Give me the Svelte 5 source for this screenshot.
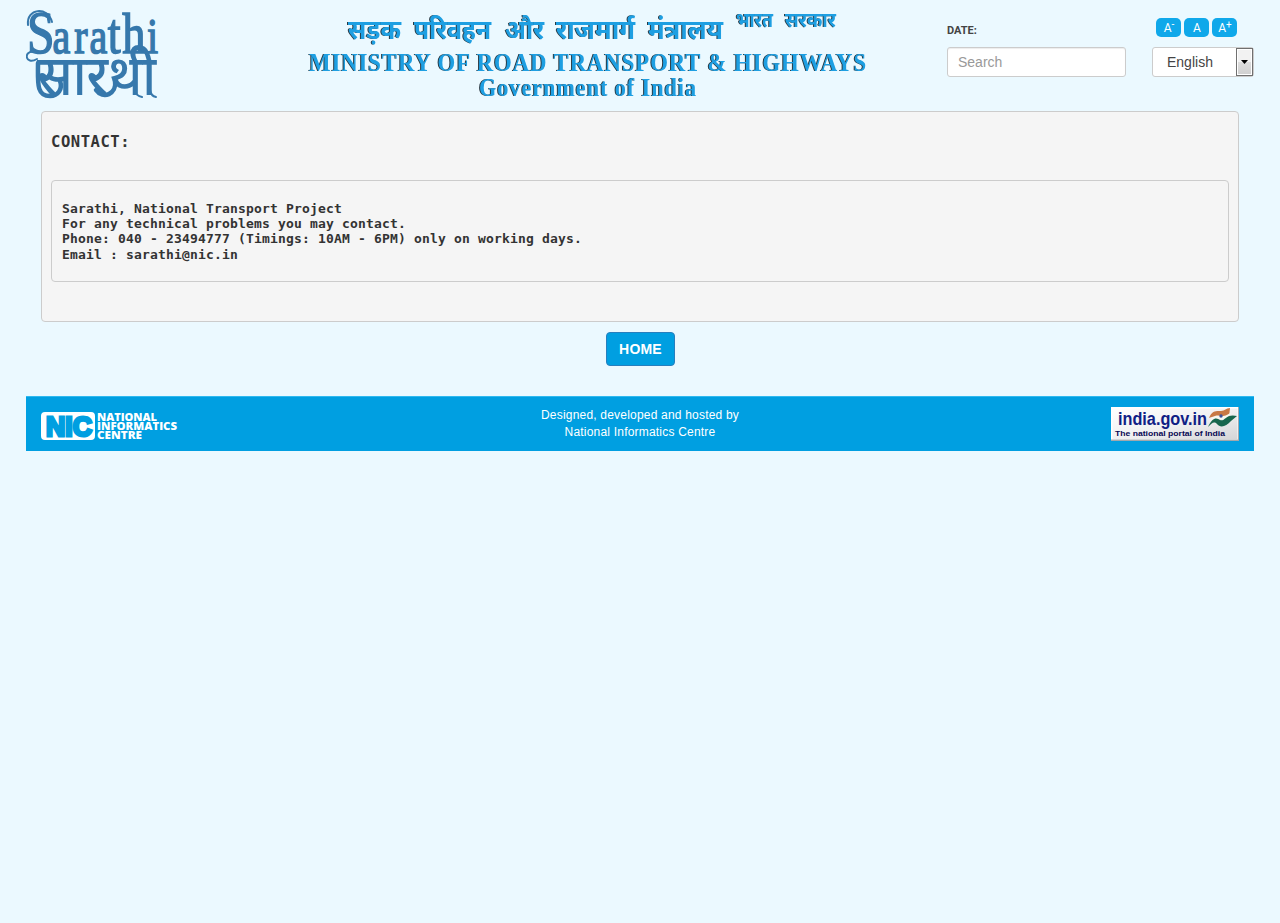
<script>
  const sizes = ['-', '', '+'];
  const hindiWords = [
    { text: 'सड़क', x: 348, width: 53 },
    { text: 'परिवहन', x: 414, width: 77 },
    { text: 'और', x: 505, width: 39 },
    { text: 'राजमार्ग', x: 556, width: 79 },
    { text: 'मंत्रालय', x: 648, width: 75 }
  ];
  const contact = [
    'Sarathi, National Transport Project',
    'For any technical problems you may contact.',
    'Phone: 040 - 23494777 (Timings: 10AM - 6PM) only on working days.',
    'Email : sarathi@nic.in'
  ];
</script>

<div class="page">
  <header>
    <svg class="logo" viewBox="26 0 140 111" role="img" aria-label="Sarathi">
      <text class="latin" transform="translate(27 53) scale(.8 1)"><tspan font-size="62" x="0" font-weight="400">S</tspan><tspan font-size="50" x="32 59 78">ara</tspan><tspan font-size="58" x="101 119">th</tspan><tspan font-size="50" x="150">i</tspan></text>
      <text class="hindi" transform="translate(37 95) scale(1 1.38)" font-size="41" textLength="119" lengthAdjust="spacingAndGlyphs">सारथी</text>
      <g class="swash">
        <path d="M37 59C25 66 23 50 34 52" />
        <path d="M28 25C26 8 48 6 52 22" />
        <path d="M38 63C38 82 36 96 50 96C58 96 63 89 60 81" class="heavy" />
        <path d="M96 90C103 100 117 94 115 81" class="heavy" />
        <path d="M134 90Q136 96 142 97M150 90Q151 96 156 97" />
      </g>
    </svg>

    <svg class="title" viewBox="300 0 580 111" role="img" aria-label="Ministry of Road Transport and Highways">
      <g class="banner dev">
        {#each hindiWords as word}
          <text x={word.x} y="39" font-size="27" textLength={word.width} lengthAdjust="spacingAndGlyphs">{word.text}</text>
        {/each}
        <text x="736" y="27" font-size="20" textLength="37" lengthAdjust="spacingAndGlyphs">भारत</text>
        <text x="785" y="27" font-size="20" textLength="51" lengthAdjust="spacingAndGlyphs">सरकार</text>
      </g>
      <g class="banner serif">
        <text x="309" y="70.500" font-size="26" textLength="558" lengthAdjust="spacingAndGlyphs" letter-spacing="1">MINISTRY OF ROAD TRANSPORT &amp; HIGHWAYS</text>
        <text x="479" y="96" font-size="25" textLength="218" lengthAdjust="spacingAndGlyphs" letter-spacing="1">Government of India</text>
      </g>
    </svg>

    <div class="tools">
      <div class="top">
        <b class="date">DATE:</b>
        <div class="sizes">
          {#each sizes as s}<button>A{#if s}<sup>{s}</sup>{/if}</button>{/each}
        </div>
      </div>
      <div class="fields">
        <input placeholder="Search" />
        <div class="select">
          <span>English</span>
          <i><svg width="7" height="4" viewBox="0 0 7 4"><path d="M0 0H7L3.500 4Z" /></svg></i>
        </div>
      </div>
    </div>
  </header>

  <main>
    <section>
      <h1>CONTACT:</h1>
      <div class="details">
        {#each contact as line}<p>{line}</p>{/each}
      </div>
    </section>
    <button class="home">HOME</button>
  </main>

  <footer>
    <svg class="nic" width="140" height="32" viewBox="0 0 140 32" role="img" aria-label="NIC">
      <rect x="1" y="2" width="52" height="26" rx="3" fill="#fff" stroke="#fff" stroke-width="2" />
      <text class="mark" x="5" y="24.500" font-size="28" textLength="46" lengthAdjust="spacingAndGlyphs">NIC</text>
      <g class="nictext">
        <text x="56" y="10" textLength="60" lengthAdjust="spacingAndGlyphs">NATIONAL</text>
        <text x="56" y="19" textLength="80" lengthAdjust="spacingAndGlyphs">INFORMATICS</text>
        <text x="56" y="28" textLength="45" lengthAdjust="spacingAndGlyphs">CENTRE</text>
      </g>
    </svg>
    <div class="credit">Designed, developed and hosted by<br />National Informatics Centre</div>
    <svg class="portal" width="128" height="34" viewBox="0 0 128 34" role="img" aria-label="india.gov.in">
      <defs>
        <linearGradient id="silver" x2="1" y2="1"><stop offset="0" stop-color="#fff" /><stop offset=".5" stop-color="#f1f1f2" /><stop offset="1" stop-color="#d5d5d7" /></linearGradient>
      </defs>
      <rect width="128" height="34" fill="#a3a8ac" />
      <rect width="127" height="32.500" fill="#fff" />
      <rect x="1.500" y="1.500" width="125" height="30.500" fill="url(#silver)" />
      <text class="site" x="7" y="18" font-size="18.500" textLength="89" lengthAdjust="spacingAndGlyphs">india.gov.in</text>
      <text class="tag" x="4" y="29" font-size="8" textLength="110" lengthAdjust="spacingAndGlyphs">The national portal of India</text>
      <path d="M98 11C101 3 106 4 110 4C114 4 115 1 119 1L118 10C111 12 107 7 98 11Z" fill="#c87945" />
      <path d="M98 15C103 6 108 9 112 9C116 9 118 6 120 6L116 12C110 15 106 8 98 15Z" fill="#f8f8ef" />
      <path d="M97 20C102 9 106 11 109 13C114 15 115 6 126 9L120 14C115 20 109 21 106 17C103 14 101 16 97 20Z" fill="#17664d" />
      <circle cx="110" cy="9" r="1.700" fill="#3c5299" />
    </svg>
  </footer>
</div>

<style>
  :global(body) { background: #ebf9ff; }
  .page { padding: 0 26px; font-family: "Liberation Sans", Arial, sans-serif; color: #333; }
  header { display: flex; height: 111px; }
  .logo { width: 140px; height: 111px; margin-right: 134px; flex: none; }
  .title { width: 580px; height: 111px; margin-right: 67px; flex: none; }
  .swash path { fill: none; stroke: #3678ac; stroke-width: 2; stroke-linecap: round; }
  .swash path.heavy { stroke-width: 4.500; }
  .latin { font-family: "Liberation Serif", serif; fill: #3678ac; stroke: #3678ac; stroke-width: 1.500; }
  .hindi { font-family: "Noto Sans", sans-serif; font-weight: 500; fill: #3678ac; }
  .banner { fill: #1e9fe2; filter: drop-shadow(-.7px .8px .6px rgba(20, 35, 45, .9)); }
  .dev { font-family: "Noto Sans", sans-serif; font-weight: bold; }
  .serif { font-family: "Liberation Serif", serif; font-weight: bold; }
  .tools { width: 307px; flex: none; }
  .top { display: flex; justify-content: space-between; height: 47px; padding: 18px 17px 0 0; box-sizing: border-box; }
  .date { font: bold 11px/26px Roboto, sans-serif; color: #444; }
  .sizes { display: flex; gap: 3px; }
  .sizes button { width: 25px; height: 19px; padding: 1px 0 0 1px; border: 0; border-radius: 5px; background: #0fa8ea; color: #fff; font: 12px/18px Roboto, sans-serif; }
  .sizes sup { font-size: 10px; line-height: 0; vertical-align: 4px; }
  .fields { display: flex; gap: 26px; }
  input { width: 179px; height: 30px; box-sizing: border-box; border: 1px solid #ccc; border-radius: 3px; padding: 0 10px; background: #fff; font: 14px "Liberation Sans", sans-serif; box-shadow: inset 0 1px 1px rgba(0, 0, 0, .075); }
  input::placeholder { color: #999; }
  .select { display: flex; width: 102px; height: 30px; box-sizing: border-box; border: 1px solid #ccc; border-radius: 3px; background: #fff; font-size: 14px; line-height: 28px; color: #444; }
  .select span { flex: 1; padding-left: 14px; }
  .select i { display: flex; align-items: center; justify-content: center; width: 17px; box-sizing: border-box; border: 1px solid #707070; box-shadow: inset 0 0 0 1px #fff; background: linear-gradient(#f2f2f2 0 48%, #ddd 52%, #cfcfcf); }
  main { display: flex; flex-direction: column; align-items: center; }
  section { width: 1198px; height: 211px; padding: 20px 9px 0; box-sizing: border-box; border: 1px solid #ccc; border-radius: 4px; background: #f5f5f5; font-family: "DejaVu Sans Mono", monospace; }
  h1 { margin: 0 0 28px; font-size: 15.500px; line-height: 20px; letter-spacing: .55px; }
  .details { height: 102px; box-sizing: border-box; padding: 20px 10px; border: 1px solid #ccc; border-radius: 4px; font-size: 13px; font-weight: bold; line-height: 15.200px; letter-spacing: .174px; }
  p { margin: 0; white-space: pre; }
  .home { width: 69px; height: 34px; margin: 10px 0 30px; padding: 0 0 0 1px; border: 1px solid #277fbe; border-radius: 4px; background: #009fe1; color: #fff; font: bold 14px "Liberation Sans", sans-serif; letter-spacing: .2px; }
  footer { display: grid; grid-template-columns: 1fr auto 1fr; height: 55px; box-sizing: border-box; padding: 10px 15px 0; border-top: 1px solid #2fb9ef; background: #009fe1; }
  .nic { margin-top: 4px; overflow: visible; }
  .mark { fill: #009fe1; stroke: #009fe1; stroke-width: 3; font-family: "Liberation Sans", sans-serif; font-weight: bold; }
  .nictext { fill: #fff; font: 800 11px "Open Sans", sans-serif; }
  .credit { color: #fff; font-size: 12px; line-height: 17px; letter-spacing: .2px; text-align: center; }
  .portal { justify-self: end; }
  .site { fill: #102085; font-family: "Liberation Sans", sans-serif; font-weight: bold; }
  .tag { fill: #080853; font-family: "Liberation Sans", sans-serif; font-weight: bold; }
</style>
